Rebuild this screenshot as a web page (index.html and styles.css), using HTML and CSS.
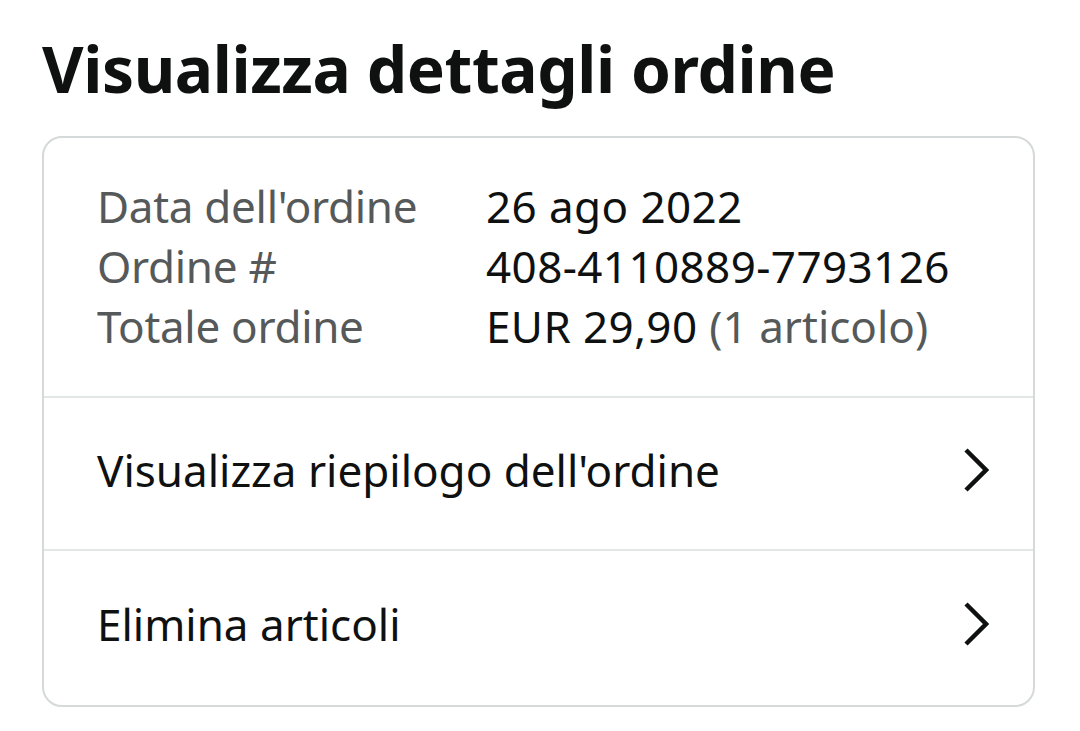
FILE: index.html
```html
<!DOCTYPE html>
<html lang="it">
<head>
<meta charset="utf-8">
<title>Visualizza dettagli ordine</title>
<link rel="stylesheet" href="styles.css">
</head>
<body>
<main class="page">
  <h1 class="title">Visualizza dettagli ordine</h1>
  <section class="card">
    <div class="details">
      <div class="row"><span class="label">Data dell'ordine</span><span class="value">26 ago 2022</span></div>
      <div class="row"><span class="label">Ordine #</span><span class="value">408-4110889-7793126</span></div>
      <div class="row"><span class="label">Totale ordine</span><span class="value">EUR 29,90 <span class="muted">(1 articolo)</span></span></div>
    </div>
    <a class="link-row" href="#">
      <span>Visualizza riepilogo dell'ordine</span>
      <svg class="chev" width="26" height="44" viewBox="0 0 26 44"><path d="M3 2 L23 22 L3 42" fill="none" stroke="#0f1111" stroke-width="4.5"/></svg>
    </a>
    <a class="link-row last" href="#">
      <span>Elimina articoli</span>
      <svg class="chev" width="26" height="44" viewBox="0 0 26 44"><path d="M3 2 L23 22 L3 42" fill="none" stroke="#0f1111" stroke-width="4.5"/></svg>
    </a>
  </section>
</main>
</body>
</html>
```

FILE: styles.css
```css
html, body {
  margin: 0;
  padding: 0;
  background: #ffffff;
}
body {
  font-family: "Noto Sans", "Open Sans", sans-serif;
  color: #0f1111;
}
.page {
  padding: 27px 0 0 42px;
  width: 993px;
}
.title {
  margin: 0 0 25px 0;
  font-size: 64px;
  line-height: 84px;
  font-weight: 700;
  letter-spacing: -0.4px;
}
.card {
  border: 2px solid #d5d9d9;
  border-radius: 20px;
  box-sizing: border-box;
  width: 993px;
}
.details {
  padding: 38px 53px 40px 53px;
  border-bottom: 2px solid #e3e6e6;
}
.row {
  display: flex;
  font-size: 44px;
  line-height: 60px;
}
.label {
  width: 389px;
  color: #565959;
  letter-spacing: -0.3px;
}
.value {
  color: #0f1111;
  letter-spacing: 0.4px;
}
.muted {
  color: #565959;
  letter-spacing: 0;
}
.link-row {
  box-sizing: border-box;
  display: flex;
  align-items: center;
  justify-content: space-between;
  height: 153px;
  padding: 0 44px 8px 53px;
  border-bottom: 2px solid #e3e6e6;
  font-size: 44px;
  color: #0f1111;
  text-decoration: none;
}
.link-row.last {
  border-bottom: none;
  height: 154px;
}
.chev {
  display: block;
}
```
